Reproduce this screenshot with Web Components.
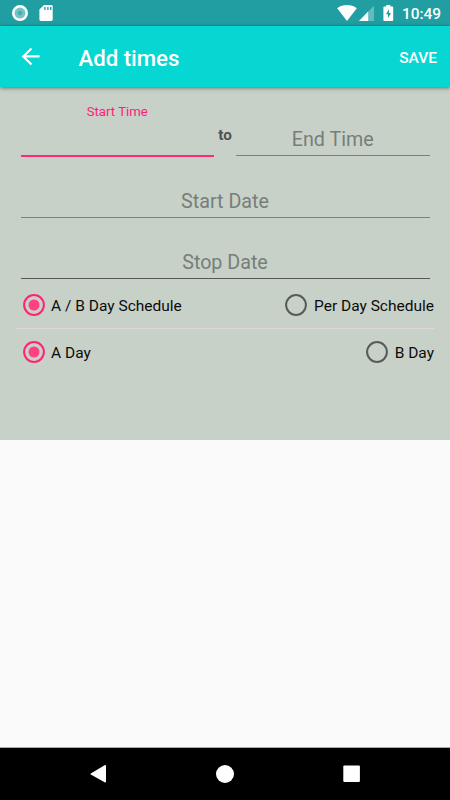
<!DOCTYPE html>
<html lang="en">
<head>
<meta charset="utf-8">
<title>Add times</title>
<style>
html,body{margin:0;height:100%}
body{font-family:Roboto,"Liberation Sans",sans-serif;background:#fafafa;overflow:hidden}
</style>
</head>
<body>
<add-times-screen></add-times-screen>
<script>
function define(name, html) {
  const template = document.createElement('template');
  template.innerHTML = html;
  customElements.define(name, class extends HTMLElement {
    constructor() {
      super();
      this.attachShadow({mode: 'open'}).append(template.content.cloneNode(true));
    }
  });
}

define('status-bar', `
<style>
:host{display:flex;height:26px;background:#209ea2;color:#fff;box-sizing:border-box;padding:0 9px 0 12px;align-items:center}
svg{display:block;flex:none}
.sd{margin-left:11px}
.gap{flex:1}
.signal{margin-left:2px}
.battery{margin-left:9px}
time{font-size:15.4px;font-weight:500;line-height:26px;margin-left:8px;padding-top:2px}
</style>
<svg width="16" height="26" viewBox="0 0 16 26"><circle cx="8" cy="13.1" r="8" fill="#fff"/><circle cx="8" cy="13.1" r="5.5" fill="#76c3c5"/><circle cx="8" cy="13.1" r="2.4" fill="#4eabad"/></svg>
<svg class="sd" width="14" height="26" viewBox="0 0 14 26"><path d="M5 5h7.3q1.4 0 1.4 1.4v13.2q0 1.4-1.4 1.4H2Q.4 21 .4 19.6V9.6z" fill="#fff"/><path d="M5.2 7h1.4v3H5.2zM8.2 7h1.4v3H8.2zM11 7h1.4v3H11z" fill="#209ea2"/></svg>
<span class="gap"></span>
<svg width="20" height="26" viewBox="0 0 20 26"><path d="M.2 8.2C5.7 3.9 14.3 3.9 19.8 8.2L10 21z" fill="#fff"/></svg>
<svg class="signal" width="15" height="26" viewBox="0 0 15 26"><path d="M15 5.7V21H0z" fill="#63bbbd"/><path d="M9.2 11.6V21H0z" fill="#fff"/></svg>
<svg class="battery" width="11" height="26" viewBox="0 0 11 26"><path d="M3.2 5h4.2v1.4h1.8q1 0 1 1V20q0 1-1 1H1.4q-1 0-1-1V7.4q0-1 1-1h1.8z" fill="#fff"/><path d="M6 9.2L3 14.2h2v4l3-5.2H6z" fill="#209ea2"/></svg>
<time>10:49</time>
`);

define('app-bar', `
<style>
:host{display:flex;height:61px;background:#07d7d2;color:#fff;align-items:center;padding:0 13px 0 21px;box-sizing:border-box;box-shadow:0 1px 4px rgba(0,0,0,.5);position:relative;z-index:1}
svg{display:block}
h1{font-size:22.2px;font-weight:500;margin:0 auto 0 38.5px;line-height:26px;padding-top:3px}
button{all:unset;font-size:15.5px;font-weight:500;line-height:20px;padding-top:2px}
</style>
<svg width="19" height="19" viewBox="0 0 19 19"><path d="M18.5 9.4H2.2M10.5 1.4L2.2 9.4l8.3 8.2" fill="none" stroke="#fff" stroke-width="2.1"/></svg>
<h1><slot></slot></h1><button><slot name="action"></slot></button>
`);

define('form-field', `
<style>
:host{display:flex;flex-direction:column;justify-content:flex-end;align-items:center;box-sizing:border-box;height:61px;padding-bottom:4px;border-bottom:1px solid #7a827d;font-size:19.7px;line-height:22px;color:#777e79}
:host([focused]){height:62px;border-bottom:2px solid #ff287a;color:#ff1c78;font-size:13.2px;line-height:16px;padding-bottom:35px}
:host([strong]){border-bottom-color:#555a57}
</style><span><slot></slot></span>
`);

define('radio-option', `
<style>
:host{display:flex;align-items:center;gap:6.5px;font-size:15.5px;line-height:20px;color:#0b0c0b}
svg{display:block}
circle{fill:none;stroke:#575c58;stroke-width:2}
.dot{display:none;stroke:none;fill:#ff4081}
:host([checked]) .ring{stroke:#ff2377}
:host([checked]) .dot{display:block}
span{padding-top:1px}
</style><svg width="22" height="22" viewBox="0 0 22 22"><circle class="ring" cx="11" cy="11" r="9.9"/><circle class="dot" cx="11" cy="11" r="5.5"/></svg><span><slot></slot></span>
`);

define('radio-row', `
<style>
:host{display:flex;justify-content:space-between;align-items:center;height:22px}
</style><slot></slot>
`);

define('time-form', `
<style>
:host{display:block;box-sizing:border-box;height:353px;padding:8px 16px 0;background:#c8d1c8}
.fields{padding:0 4.5px}
.times{display:flex;height:62px;align-items:flex-start}
.times form-field{flex:1}
.times b{width:22px;text-align:center;font-size:15.3px;line-height:20px;color:#4f5450;padding-top:30px}
radio-row{padding-left:6.6px}
.first{margin-top:15px}
hr{border:0;height:1px;background:#dad8d8;margin:12px 0}
</style>
<div class="fields">
<div class="times"><form-field focused>Start Time</form-field><b>to</b><form-field>End Time</form-field></div>
<form-field>Start Date</form-field>
<form-field strong>Stop Date</form-field>
</div>
<radio-row class="first"><radio-option checked>A / B Day Schedule</radio-option><radio-option>Per Day Schedule</radio-option></radio-row>
<hr>
<radio-row><radio-option checked>A Day</radio-option><radio-option>B Day</radio-option></radio-row>
`);

define('nav-bar', `
<style>
:host{display:flex;height:52px;background:#000;justify-content:space-between;align-items:center;padding:0 90px;border-top:1px solid #aaa;box-sizing:content-box}
svg{display:block}
</style>
<svg width="18" height="20" viewBox="0 0 18 20"><path d="M.8 9.4L14.6 1.2Q16 .6 16 2V17.6Q16 19 14.6 18.2L.8 10.4Q0 9.9.8 9.4z" fill="#fff"/></svg>
<svg width="18" height="20" viewBox="0 0 18 20"><circle cx="9" cy="10" r="9" fill="#fff"/></svg>
<svg width="18" height="20" viewBox="0 0 18 20"><rect x="1.3" y="1.5" width="16.6" height="16.5" rx="1" fill="#fff"/></svg>
`);

define('add-times-screen', `
<style>
:host{display:flex;flex-direction:column;width:450px;height:800px;background:#fafafa}
nav-bar{margin-top:auto}
</style>
<status-bar></status-bar>
<app-bar>Add times<span slot="action">SAVE</span></app-bar>
<time-form></time-form>
<nav-bar></nav-bar>
`);
</script>
</body>
</html>
